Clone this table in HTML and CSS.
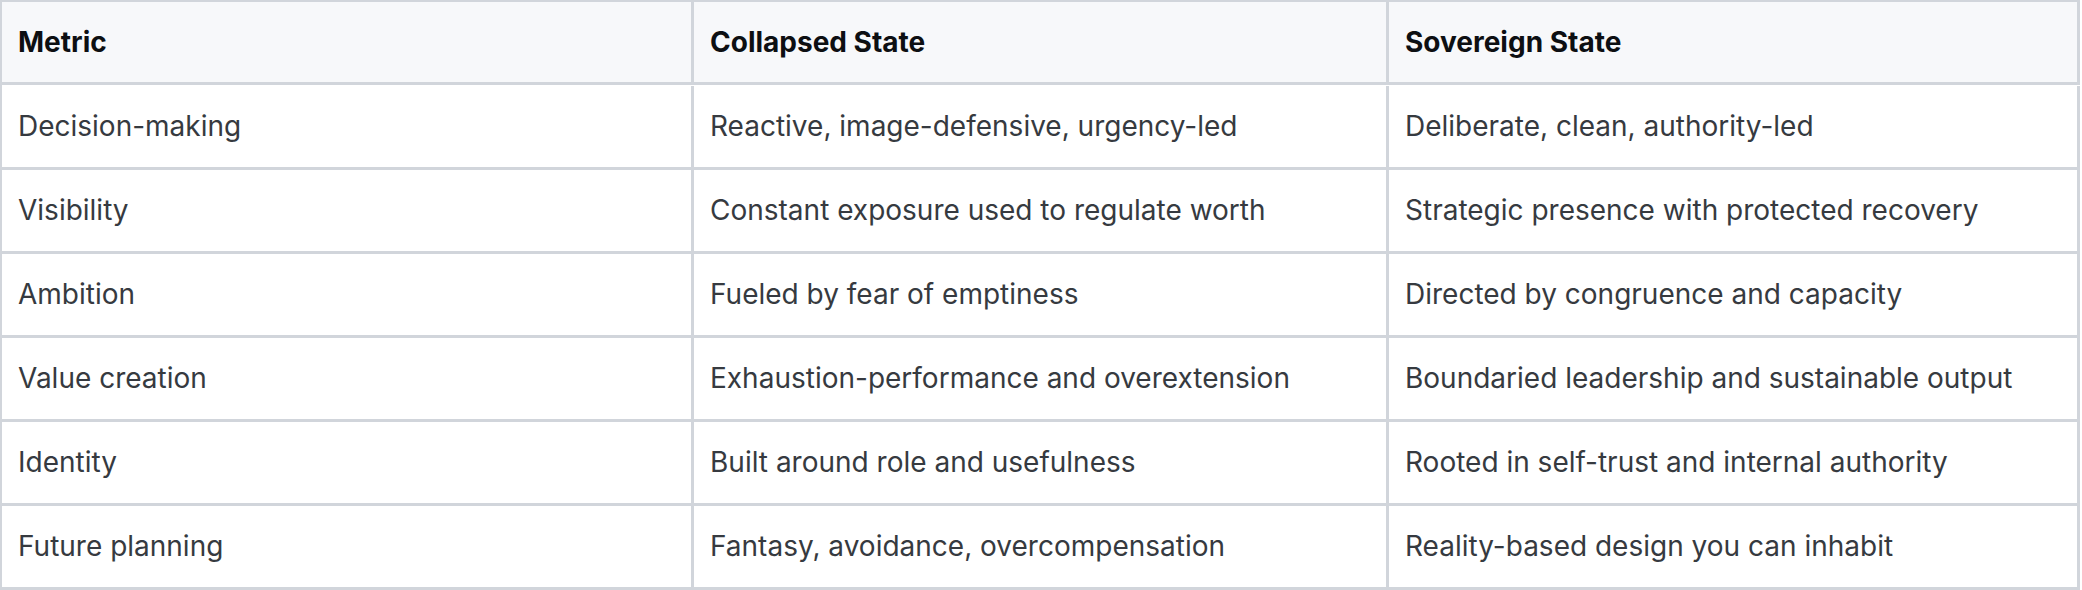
FILE: index.html
```html
<!DOCTYPE html>
<html lang="en">
<head>
<meta charset="utf-8">
<title>Metric comparison</title>
<link rel="stylesheet" href="styles.css">
</head>
<body>
<div class="table" role="table">
  <div class="cell head" role="columnheader">Metric</div>
  <div class="cell head" role="columnheader">Collapsed State</div>
  <div class="cell head" role="columnheader">Sovereign State</div>

  <div class="cell" role="cell">Decision-making</div>
  <div class="cell" role="cell">Reactive, image-defensive, urgency-led</div>
  <div class="cell" role="cell">Deliberate, clean, authority-led</div>

  <div class="cell" role="cell">Visibility</div>
  <div class="cell" role="cell">Constant exposure used to regulate worth</div>
  <div class="cell" role="cell">Strategic presence with protected recovery</div>

  <div class="cell" role="cell">Ambition</div>
  <div class="cell" role="cell">Fueled by fear of emptiness</div>
  <div class="cell" role="cell">Directed by congruence and capacity</div>

  <div class="cell" role="cell">Value creation</div>
  <div class="cell" role="cell">Exhaustion-performance and overextension</div>
  <div class="cell" role="cell">Boundaried leadership and sustainable output</div>

  <div class="cell" role="cell">Identity</div>
  <div class="cell" role="cell">Built around role and usefulness</div>
  <div class="cell" role="cell">Rooted in self-trust and internal authority</div>

  <div class="cell" role="cell">Future planning</div>
  <div class="cell" role="cell">Fantasy, avoidance, overcompensation</div>
  <div class="cell" role="cell">Reality-based design you can inhabit</div>
</div>
</body>
</html>
```
FILE: styles.css
```css
* { box-sizing: border-box; }
html, body { margin: 0; padding: 0; background: #ffffff; }
body {
  font-family: Inter, "Noto Sans", "Liberation Sans", sans-serif;
  font-size: 28px;
  line-height: 40px;
  color: #363a40;
}
.table {
  width: 2080px;
  display: grid;
  grid-template-columns: 692px 695px 691px;
  grid-auto-rows: 84px;
  border-top: 2px solid #d1d5db;
  border-left: 2px solid #d1d5db;
}
.cell {
  display: flex;
  align-items: center;
  padding: 0 16px 1px 16px;
  border-right: 3px solid #d1d5db;
  border-bottom: 3px solid #d1d5db;
  white-space: nowrap;
}
.head {
  height: 83px;
  background: #f7f8fa;
  font-weight: 700;
  color: #0d0f12;
}
```
